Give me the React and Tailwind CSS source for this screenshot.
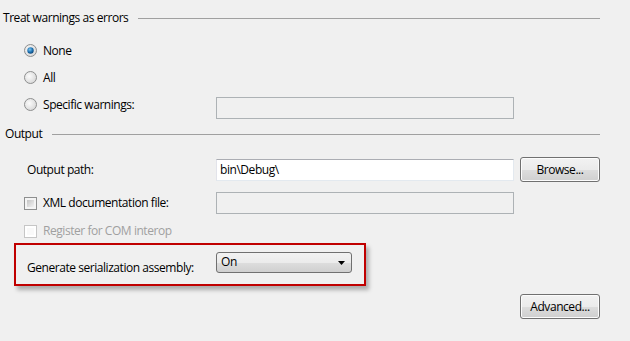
import React from "react";

const FONT = { fontFamily: '"Open Sans", "Noto Sans", sans-serif', letterSpacing: "-0.45px" };

function Radio({ checked }) {
  return (
    <svg width="13" height="13" viewBox="0 0 13 13" className="shrink-0">
      <defs>
        <radialGradient id="rfill" cx="0.4" cy="0.4" r="0.7">
          <stop offset="0" stopColor="#fbfbfb" />
          <stop offset="1" stopColor="#d4d4d4" />
        </radialGradient>
        <radialGradient id="rdot" cx="0.4" cy="0.35" r="0.7">
          <stop offset="0" stopColor="#7cc5ef" />
          <stop offset="0.6" stopColor="#1b6fb0" />
          <stop offset="1" stopColor="#0c3f6e" />
        </radialGradient>
      </defs>
      <circle cx="6.5" cy="6.5" r="6" fill="url(#rfill)" stroke="#8e8f8f" strokeWidth="1" />
      {checked && <circle cx="6.5" cy="6.5" r="3.2" fill="url(#rdot)" />}
    </svg>
  );
}

function Checkbox({ disabled }) {
  return (
    <div
      className={`w-[13px] h-[13px] shrink-0 border p-[2px] ${
        disabled ? "border-[#c6c6c6] bg-white" : "border-[#8e8f8f] bg-[#f4f4f4]"
      }`}
    >
      <div
        className={`w-full h-full ${
          disabled ? "bg-[#f9f9f9]" : "bg-gradient-to-br from-[#c4c4c4] to-[#f2f2f2]"
        }`}
      />
    </div>
  );
}

function TextBox({ value, disabled }) {
  return (
    <div
      className={`w-[298px] h-[22px] flex items-center px-[3px] text-[12px] ${
        disabled
          ? "bg-[#f0f0f0] border border-[#adb2b5]"
          : "bg-white border border-[#e3e9ef] border-t-[#abadb3] border-l-[#e2e3ea]"
      }`}
    >
      {value}
    </div>
  );
}

function Button({ children }) {
  return (
    <div className="w-[80px] h-[25px] rounded-[3px] border border-[#707070] bg-[linear-gradient(#f2f2f2_0%,#ebebeb_50%,#dddddd_51%,#cfcfcf_100%)] shadow-[inset_0_0_0_1px_#fcfcfc] flex items-center justify-center text-[12px] text-black">
      {children}
    </div>
  );
}

function SectionHeader({ title, pad }) {
  return (
    <div className="h-[18px] flex items-center pr-[30px]">
      <span className={`${pad} text-[12px] text-black leading-none`}>{title}</span>
      <div className="flex-1 h-px bg-[#a0a0a0] ml-[10px]" />
    </div>
  );
}

export default function App() {
  return (
    <div className="w-[630px] h-[341px] bg-[#f0f0f0] overflow-hidden text-black" style={FONT}>
      <div className="pt-[9px]">
        <SectionHeader title="Treat warnings as errors" pad="pl-[3px]" />
      </div>

      <div className="mt-[10px] pl-[24px]">
        <div className="h-[27px] flex items-center">
          <Radio checked />
          <span className="ml-[6px] text-[12px]">None</span>
        </div>
        <div className="h-[27px] flex items-center">
          <Radio />
          <span className="ml-[6px] text-[12px]">All</span>
        </div>
        <div className="h-[27px] flex items-start">
          <div className="w-[192px] h-[27px] flex items-center">
            <Radio />
            <span className="ml-[6px] text-[12px]">Specific warnings:</span>
          </div>
          <div className="mt-[6px]">
            <TextBox disabled />
          </div>
        </div>
      </div>

      <div className="mt-[7px]">
        <SectionHeader title="Output" pad="pl-[5px]" />
      </div>

      <div className="mt-[14px] h-[25px] flex items-center pl-[27px]">
        <span className="w-[189px] text-[12px]">Output path:</span>
        <TextBox value="bin\Debug\" />
        <div className="ml-[6px]">
          <Button>Browse...</Button>
        </div>
      </div>

      <div className="mt-[10px] h-[22px] flex items-center pl-[24px]">
        <div className="w-[192px] flex items-center">
          <Checkbox />
          <span className="ml-[6px] text-[12px]">XML documentation file:</span>
        </div>
        <TextBox disabled />
      </div>

      <div className="mt-[8px] h-[18px] flex items-center pl-[24px]">
        <Checkbox disabled />
        <span className="ml-[6px] text-[12px] text-[#a0a0a0]">Register for COM interop</span>
      </div>

      <div className="mt-[3px] ml-[14px] w-[352px] h-[43px] border-2 border-[#c00000] shadow-[3px_4px_4px_rgba(0,0,0,0.28)] flex items-start pl-[11px] pt-[7px]">
        <span className="w-[189px] mt-[7px] text-[12px]">Generate serialization assembly:</span>
        <div className="w-[136px] h-[21px] rounded-[3px] border border-[#707070] bg-[linear-gradient(#f2f2f2_0%,#ebebeb_50%,#dddddd_51%,#cfcfcf_100%)] flex items-center justify-between pl-[4px] pr-[5px] text-[12px]">
          <span className="-mt-[2px]">On</span>
          <svg width="8" height="4" viewBox="0 0 8 4">
            <path d="M0 0 H7 L3.5 4 Z" fill="#000" />
          </svg>
        </div>
      </div>

      <div className="mt-[8px] flex justify-end pr-[30px]">
        <Button>Advanced...</Button>
      </div>
    </div>
  );
}
